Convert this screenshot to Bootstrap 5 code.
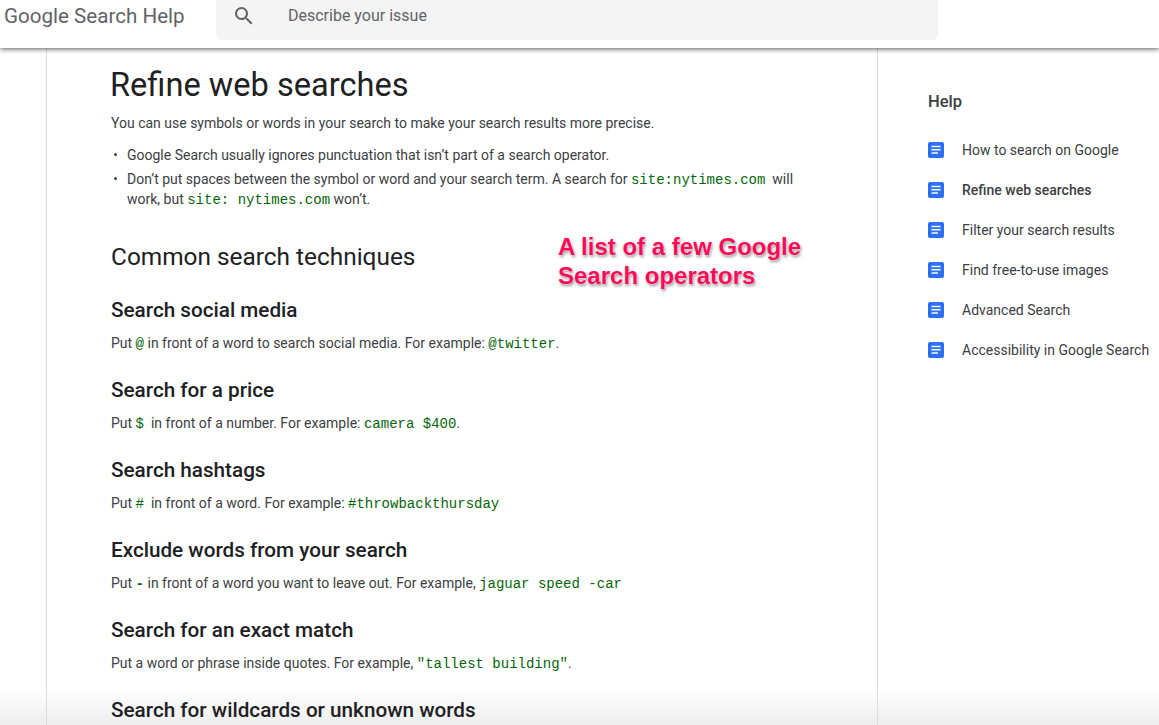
<!DOCTYPE html>
<html lang="en">
<head>
<meta charset="utf-8">
<title>Refine web searches</title>
<link href="https://cdn.jsdelivr.net/npm/bootstrap@5.3.0/dist/css/bootstrap.min.css" rel="stylesheet">
<style>
html,body{height:725px;overflow:hidden;background:#fff;}
body{font-family:Roboto,"Liberation Sans",sans-serif;font-size:14px;color:#3c4043;position:relative;}
.top-bar{height:48px;box-shadow:0 1px 5px rgba(0,0,0,.65);position:relative;z-index:2;background:#fff;}
.brand-name{font-size:20.6px;line-height:32px;color:#5f6368;width:216px;padding-left:4px;}
.search-box{width:722px;height:40px;background:#f4f4f4;border-radius:0 0 6px 6px;color:#5f6368;font-size:16px;padding-bottom:8px;}
.search-ico{margin-left:16px;margin-right:32px;}
.content-wrap{position:relative;z-index:1;}
.main-pane{margin-left:46px;width:832px;height:677px;border-left:1px solid #dadce0;border-right:1px solid #dadce0;padding-left:64px;overflow:hidden;}
.side-pane{padding-left:50px;}
.page-title{font-size:32.6px;line-height:40px;font-weight:400;color:#202124;margin:17px 0 0 -1px;}
.intro{line-height:20px;margin:8px 0 0;}
.tips{list-style:none;padding:0 0 0 16px;margin:12px 0 0;width:690px;}
.tips li{line-height:20px;margin-bottom:4px;position:relative;}
.tips li::before{content:"";position:absolute;left:-13px;top:8px;width:3px;height:3px;border-radius:50%;background:#3c4043;}
.code-txt{font-family:"Liberation Mono",monospace;font-size:14px;line-height:1;color:#056608;}
.sec-title{font-size:24.4px;line-height:32px;font-weight:400;color:#202124;margin:32px 0 0;}
.op-title{font-size:20.7px;line-height:28px;font-weight:500;color:#202124;margin:0;}
.op-block{height:80px;}
.op-first{margin-top:23px;}
.op-text{line-height:20px;margin:9px 0 0;}
.dash-txt{font-weight:700;}
.help-title{font-size:16.500px;line-height:24px;font-weight:500;color:#3c4043;margin:42px 0 0;}
.help-list{margin-top:16px;}
.help-row{height:40px;color:#3c4043;}
.help-row svg{margin-right:18px;flex:none;}
.help-on{font-weight:500;}
.note-text{position:absolute;left:558px;top:232px;z-index:3;font-family:"Liberation Sans",sans-serif;font-weight:700;font-size:24px;line-height:29px;color:#fb0a5a;text-shadow:0 0 2px #fff,1px 2px 3px rgba(0,0,0,.45);}
.bottom-fade{position:absolute;left:0;right:0;bottom:0;height:36px;z-index:0;background:linear-gradient(rgba(240,240,240,0),rgba(236,236,236,.9));pointer-events:none;}
</style>
</head>
<body>
<header class="top-bar d-flex align-items-start">
  <div class="brand-name">Google Search Help</div>
  <div class="search-box d-flex align-items-center">
    <svg class="search-ico" width="24" height="24" viewBox="0 0 24 24" fill="#5f6368" aria-hidden="true"><path d="M15.5 14h-.79l-.28-.27A6.47 6.47 0 0 0 16 9.5 6.5 6.5 0 1 0 9.5 16c1.61 0 3.09-.59 4.23-1.57l.27.28v.79l5 4.99L20.49 19l-4.99-5zm-6 0C7.01 14 5 11.99 5 9.5S7.01 5 9.5 5 14 7.01 14 9.5 11.99 14 9.5 14z"/></svg>
    <span>Describe your issue</span>
  </div>
</header>
<div class="bottom-fade"></div>
<div class="d-flex content-wrap">
  <main class="main-pane">
    <h1 class="page-title">Refine web searches</h1>
    <p class="intro">You can use symbols or words in your search to make your search results more precise.</p>
    <ul class="tips">
      <li>Google Search usually ignores punctuation that isn’t part of a search operator.</li>
      <li>Don’t put spaces between the symbol or word and your search term. A search for <span class="code-txt">site:nytimes.com</span> &nbsp;will<br>work, but <span class="code-txt">site: nytimes.com</span> won’t.</li>
    </ul>
    <h2 class="sec-title">Common search techniques</h2>
    <section class="op-block op-first">
      <h3 class="op-title">Search social media</h3>
      <p class="op-text">Put <span class="code-txt">@</span> in front of a word to search social media. For example: <span class="code-txt">@twitter</span>.</p>
    </section>
    <section class="op-block">
      <h3 class="op-title">Search for a price</h3>
      <p class="op-text">Put <span class="code-txt">$</span> &nbsp;in front of a number. For example: <span class="code-txt">camera $400</span>.</p>
    </section>
    <section class="op-block">
      <h3 class="op-title">Search hashtags</h3>
      <p class="op-text">Put <span class="code-txt">#</span> &nbsp;in front of a word. For example: <span class="code-txt">#throwbackthursday</span></p>
    </section>
    <section class="op-block">
      <h3 class="op-title">Exclude words from your search</h3>
      <p class="op-text">Put <span class="code-txt dash-txt">-</span> in front of a word you want to leave out. For example, <span class="code-txt">jaguar speed -car</span></p>
    </section>
    <section class="op-block">
      <h3 class="op-title">Search for an exact match</h3>
      <p class="op-text">Put a word or phrase inside quotes. For example, <span class="code-txt">"tallest building"</span>.</p>
    </section>
    <section class="op-block">
      <h3 class="op-title">Search for wildcards or unknown words</h3>
    </section>
  </main>
  <aside class="side-pane">
    <h2 class="help-title">Help</h2>
    <div class="help-list d-flex flex-column">
      <div class="help-row d-flex align-items-center"><svg width="16" height="16" viewBox="0 0 16 16" aria-hidden="true"><rect width="16" height="16" rx="2" fill="#2a6ff0"/><path d="M3.5 3.8h9v1.5h-9zM3.5 7h9v1.5h-9zM3.5 10.2h6.500v1.500h-6.500z" fill="#fff"/></svg><span>How to search on Google</span></div>
      <div class="help-row d-flex align-items-center help-on"><svg width="16" height="16" viewBox="0 0 16 16" aria-hidden="true"><rect width="16" height="16" rx="2" fill="#2a6ff0"/><path d="M3.5 3.8h9v1.5h-9zM3.5 7h9v1.5h-9zM3.5 10.2h6.500v1.500h-6.500z" fill="#fff"/></svg><span>Refine web searches</span></div>
      <div class="help-row d-flex align-items-center"><svg width="16" height="16" viewBox="0 0 16 16" aria-hidden="true"><rect width="16" height="16" rx="2" fill="#2a6ff0"/><path d="M3.5 3.8h9v1.5h-9zM3.5 7h9v1.5h-9zM3.5 10.2h6.500v1.500h-6.500z" fill="#fff"/></svg><span>Filter your search results</span></div>
      <div class="help-row d-flex align-items-center"><svg width="16" height="16" viewBox="0 0 16 16" aria-hidden="true"><rect width="16" height="16" rx="2" fill="#2a6ff0"/><path d="M3.5 3.8h9v1.5h-9zM3.5 7h9v1.5h-9zM3.5 10.2h6.500v1.500h-6.500z" fill="#fff"/></svg><span>Find free-to-use images</span></div>
      <div class="help-row d-flex align-items-center"><svg width="16" height="16" viewBox="0 0 16 16" aria-hidden="true"><rect width="16" height="16" rx="2" fill="#2a6ff0"/><path d="M3.5 3.8h9v1.5h-9zM3.5 7h9v1.5h-9zM3.5 10.2h6.500v1.500h-6.500z" fill="#fff"/></svg><span>Advanced Search</span></div>
      <div class="help-row d-flex align-items-center"><svg width="16" height="16" viewBox="0 0 16 16" aria-hidden="true"><rect width="16" height="16" rx="2" fill="#2a6ff0"/><path d="M3.5 3.8h9v1.5h-9zM3.5 7h9v1.5h-9zM3.5 10.2h6.500v1.500h-6.500z" fill="#fff"/></svg><span class="text-nowrap">Accessibility in Google Search</span></div>
    </div>
  </aside>
</div>
<div class="note-text">A list of a few Google<br>Search operators</div>
<script src="https://cdn.jsdelivr.net/npm/bootstrap@5.3.0/dist/js/bootstrap.bundle.min.js"></script>
</body>
</html>
